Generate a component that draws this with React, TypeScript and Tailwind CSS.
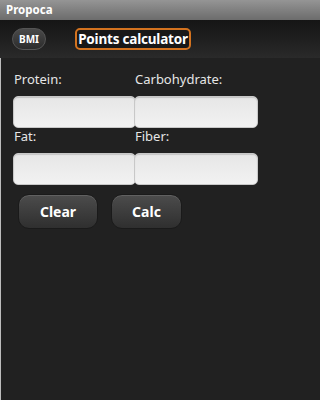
const font = { fontFamily: '"Noto Sans", "Open Sans", sans-serif' };

function Field({ label, right }: { label: string; right?: boolean }) {
  return (
    <div className={right ? "-ml-[2px]" : ""}>
      <div className="h-[25px] pl-[1px] text-[13px] leading-[16px] text-[#e6e6e6]">{label}</div>
      <div className="h-[32px] rounded-[5px] border border-[#c8c8c8] bg-gradient-to-b from-[#e6e6e6] to-[#f2f2f2] shadow-[inset_0_1px_1px_rgba(0,0,0,0.15)]" />
    </div>
  );
}

function DarkButton({ children, className }: { children: string; className: string }) {
  return (
    <button
      className={`h-[35px] rounded-[11px] border border-[#1a1a1a] bg-gradient-to-b from-[#4c4c4c] to-[#2f2f2f] text-[14px] font-bold text-white shadow-[inset_0_1px_0_rgba(255,255,255,0.12)] ${className}`}
    >
      {children}
    </button>
  );
}

export default function App() {
  return (
    <div style={font} className="flex h-[400px] w-full min-w-[267px] flex-col bg-[#212121]">
      <div className="flex h-[20px] items-center bg-gradient-to-b from-[#959595] to-[#6c6c6c] pl-[6px] text-[11.5px] font-bold text-white">
        Propoca
      </div>

      <div className="flex h-[38px] items-center bg-gradient-to-b from-[#151515] via-[#1f1f1f] to-[#2a2a2a] pl-[12px]">
        <div className="flex h-[22px] w-[34px] items-center justify-center rounded-full border border-[#555] bg-gradient-to-b from-[#4a4a4a] to-[#2c2c2c] text-[10px] font-bold text-white">
          BMI
        </div>
        <div className="ml-[29px] flex h-[22px] w-[116px] items-center justify-center rounded-[5px] border-2 border-[#d4731f] bg-[#181818] text-[13.5px] font-bold tracking-[-0.2px] text-white">
          Points calculator
        </div>
      </div>

      <div className="flex-1 border-l border-[#bdbdbd] pt-[13px]">
        <div className="ml-[12px] grid w-[243px] grid-cols-[123px_122px]">
          <Field label="Protein:" />
          <Field label="Carbohydrate:" right />
          <Field label="Fat:" />
          <Field label="Fiber:" right />
        </div>
        <div className="ml-[17px] mt-[9px] flex gap-[13px]">
          <DarkButton className="w-[80px]">Clear</DarkButton>
          <DarkButton className="w-[71px]">Calc</DarkButton>
        </div>
      </div>
    </div>
  );
}
